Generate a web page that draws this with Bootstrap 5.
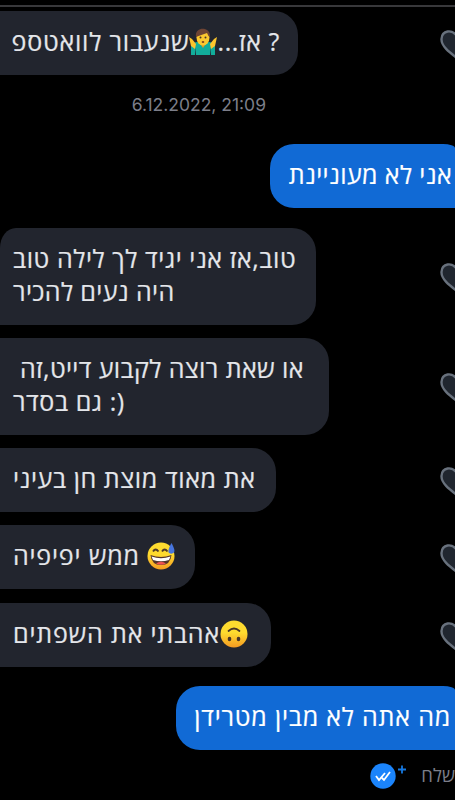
<!DOCTYPE html>
<html lang="he">
<head>
<meta charset="utf-8">
<meta name="viewport" content="width=device-width, initial-scale=1">
<title>Chat</title>
<link href="https://cdn.jsdelivr.net/npm/bootstrap@5.3.0/dist/css/bootstrap.min.css" rel="stylesheet">
<style>
body{background:#000;width:455px;height:800px;font-family:"Open Sans","Noto Sans",sans-serif}
.topline{height:2px;margin-top:5px;background:#38383b;flex:none}
.msg{height:64px;font-size:25px;letter-spacing:.6px;line-height:33px;color:#e4e6ea;white-space:pre;flex:none;-webkit-text-stroke:.2px currentColor}
.bubble{background:#22252e;border-radius:0 24px 24px 0;padding:14px 18px 0 13px;height:100%;text-align:left;flex:none}
.tall{height:97px}
.first-in .bubble{border-top-left-radius:16px 20px}
.mine .bubble{background:#116ad5;color:#fff;border-radius:24px 0 0 24px;border-top-right-radius:12px 4px;padding-left:19px;padding-right:0}
.heart{width:15px;height:29px;flex:none;margin-top:2px}
.emo{width:28px;height:28px;vertical-align:-5px}
.stamp{font-family:"Inter",sans-serif;font-size:17.5px;line-height:20px;color:#7c7e89;width:398px;flex:none}
.status{font-size:18.5px;line-height:26px;color:#7c7e89;height:28px;flex:none}
.tight{letter-spacing:.4px}
.loose{letter-spacing:.82px}
</style>
</head>
<body class="overflow-hidden d-flex flex-column">
<svg width="0" height="0" class="position-absolute"><defs>
<linearGradient id="face" x1="0" y1="0" x2="0" y2="1"><stop offset=".45" stop-color="#fedb2f"/><stop offset="1" stop-color="#f59a22"/></linearGradient>
<symbol id="heart" viewBox="0 0 15 29"><path d="M17 6C12-1 2 0 1.5 9C1.2 16 9 22 17 28" fill="#20262f" stroke="#68717d" stroke-width="2.4"/></symbol>
</defs></svg>
<div class="topline"></div>
<div class="msg d-flex justify-content-between align-items-center" style="margin-top:4px"><div class="bubble" dir="rtl" style="width:298px"><span>? אז...</span><svg class="emo" viewBox="0 0 28 28"><path d="M2 27V18Q3 14 9 14H19Q25 14 26 18V27H22V19L21 27H7L6 19V27Z" fill="#12ad9b"/><path d="M2 18L0 9L3 11L7 16L6 21ZM26 18L28 9L25 11L21 16L22 21Z" fill="#fbc52d"/><path d="M10 14H18L14 20Z" fill="#e59b20"/><ellipse cx="14" cy="9.5" rx="6.5" ry="8" fill="#fdc82f"/><path d="M7 9C5-2 22-2 21 9Q19 8 18 5Q12 7 7 9Z" fill="#6e4434"/><circle cx="11.5" cy="9.5" r="1" fill="#4b3329"/><circle cx="16.5" cy="9.5" r="1" fill="#4b3329"/><ellipse cx="14" cy="14" rx="1.3" ry="1" fill="#7c4820"/></svg><span class="loose">שנעבור לוואטספ</span></div><svg class="heart"><use href="#heart"/></svg></div>
<div class="stamp text-end" style="margin-top:20px;padding-right:132px"><span>6.12.2022, 21:09</span></div>
<div class="msg mine d-flex justify-content-end" style="margin-top:29px"><div class="bubble tight" dir="rtl" style="width:185px;padding-right:3px"><span>אני לא מעוניינת</span></div></div>
<div class="msg tall first-in d-flex justify-content-between align-items-center" style="margin-top:20px"><div class="bubble" dir="rtl" style="width:316px"><span>טוב,אז אני יגיד לך לילה טוב</span><br><span class="tight">היה נעים להכיר</span></div><svg class="heart"><use href="#heart"/></svg></div>
<div class="msg tall d-flex justify-content-between align-items-center" style="margin-top:13px"><div class="bubble" dir="rtl" style="width:329px"><span class="tight">או שאת רוצה לקבוע דייט,זה </span><br><span>(: גם בסדר</span></div><svg class="heart"><use href="#heart"/></svg></div>
<div class="msg d-flex justify-content-between align-items-center" style="margin-top:13px"><div class="bubble" dir="rtl" style="width:276px"><span>את מאוד מוצת חן בעיני</span></div><svg class="heart"><use href="#heart"/></svg></div>
<div class="msg d-flex justify-content-between align-items-center" style="margin-top:13px"><div class="bubble" dir="rtl" style="width:195px"><svg class="emo" viewBox="0 0 28 28"><circle cx="14" cy="14" r="13.5" fill="url(#face)"/><path d="M6 9.5Q8.5 5.5 11.5 9.5M15 9.5Q17.5 5.5 20.5 9.5" stroke="#503b28" stroke-width="1.8" fill="none"/><path d="M3.5 13Q14 17 24.5 13Q23.5 23 14 23Q4.5 23 3.5 13Z" fill="#54352a"/><path d="M4.5 14.5Q14 18 23.5 14.5L22 18Q14 20.5 6 18Z" fill="#fff"/><path d="M9 21.5Q14 18 19 21.5Q14 24 9 21.5Z" fill="#ef5350"/><path d="M24.5 1Q20 9 22 11Q25 12.5 27 10.5Q28.5 8 24.5 1Z" fill="#4775dd"/></svg><span class="loose"> ממש יפיפיה</span></div><svg class="heart"><use href="#heart"/></svg></div>
<div class="msg d-flex justify-content-between align-items-center" style="margin-top:14px"><div class="bubble" dir="rtl" style="width:271px"><svg class="emo" viewBox="0 0 28 28"><circle cx="14" cy="14" r="13.5" fill="url(#face)"/><path d="M8.5 11Q14 6 19.5 11" stroke="#493526" stroke-width="1.7" fill="none" stroke-linecap="round"/><ellipse cx="9.5" cy="19" rx="1.8" ry="2.3" fill="#493526"/><ellipse cx="18.5" cy="19" rx="1.8" ry="2.3" fill="#493526"/></svg><span class="loose">אהבתי את השפתים</span></div><svg class="heart"><use href="#heart"/></svg></div>
<div class="msg mine d-flex justify-content-end" style="margin-top:19px"><div class="bubble loose" dir="rtl" style="width:279px;padding-right:4px"><span>מה אתה לא מבין מטרידן</span></div></div>
<div class="status d-flex justify-content-end" style="margin-top:12px"><svg width="38" height="28" viewBox="0 0 38 28"><circle cx="13" cy="14" r="12.7" fill="#1b84fb"/><path d="M6 14L9 18L15 11M12 16L14 18L20 10" fill="none" stroke="#fff" stroke-width="1.8"/><path d="M28 7.5H36M32 3.5V11.5" stroke="#1678df" stroke-width="1.8"/></svg><span dir="rtl" style="margin-left:13px">שלח</span></div>
<script src="https://cdn.jsdelivr.net/npm/bootstrap@5.3.0/dist/js/bootstrap.bundle.min.js"></script>
</body>
</html>
